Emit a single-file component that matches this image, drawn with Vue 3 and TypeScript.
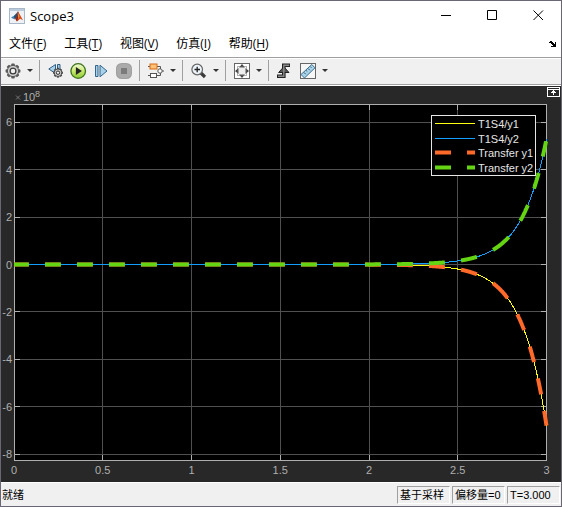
<script setup lang="ts">
interface Pt { x: number; y: number }

const menus = [
  { label: '文件', key: 'F' },
  { label: '工具', key: 'T' },
  { label: '视图', key: 'V' },
  { label: '仿真', key: 'I' },
  { label: '帮助', key: 'H' },
]

const plot = { left: 14, right: 546.5, top: 18.5, bottom: 374.5, zero: 178.5 }
const unit = 23.7
const xOf = (t: number) => plot.left + (t * (plot.right - plot.left)) / 3
const yOf = (v: number) => plot.zero - v * unit
const snap = (n: number) => Math.floor(n) + 0.5

const xTicks = [0, 0.5, 1, 1.5, 2, 2.5, 3]
const yTicks = [6, 4, 2, 0, -2, -4, -6, -8]

// Exponential response sampled at sub-pixel steps
function curve(end: number): Pt[] {
  const pts: Pt[] = []
  for (let x = plot.left; x <= plot.right; x += 0.125) {
    pts.push({ x, y: yOf(end * Math.exp(0.0402 * (x - plot.right))) })
  }
  return pts
}

function toPath(pts: Pt[]): string {
  return pts.map((p, i) => `${i ? 'L' : 'M'}${p.x.toFixed(2)} ${p.y.toFixed(2)}`).join('')
}

// Dashes advance along the dominant axis: 16 on, 16 off
function dashed(pts: Pt[]): string {
  let run = 1
  let open = false
  let d = ''
  pts.forEach((p, i) => {
    if (i) run += Math.max(Math.abs(p.x - pts[i - 1].x), Math.abs(p.y - pts[i - 1].y))
    const on = run % 32 < 16
    if (on) d += `${open ? 'L' : 'M'}${p.x.toFixed(2)} ${p.y.toFixed(2)}`
    open = on
  })
  return d
}

const down = curve(-6.8)
const up = curve(5.3)

const legend = [
  { name: 'T1S4/y1', color: '#ffff13', thick: false },
  { name: 'T1S4/y2', color: '#139fff', thick: false },
  { name: 'Transfer y1', color: '#ff6929', thick: true },
  { name: 'Transfer y2', color: '#64d413', thick: true },
]
const legendY = [37.5, 52.5, 66.5, 81.5]

const teeth = [0, 45, 90, 135, 180, 225, 270, 315]
</script>

<template>
  <div class="window">
    <header class="titlebar">
      <svg class="logo" width="16" height="16" viewBox="0 0 16 16" aria-hidden="true">
        <rect x=".5" y=".5" width="15" height="15" fill="#eef2f6" stroke="#a9b8c6" />
        <rect x="1" y="1" width="14" height="2" fill="#b9cbdc" />
        <path d="M2 9.5 5.5 7.5 8 5.5 6.5 10 4.5 11Z" fill="#3c82b4" />
        <path d="M5 8 9 3.5 8 9.5 5.5 11.5Z" fill="#294f70" />
        <path d="M9 3 10.5 6 14 12.2 11.2 10.7 8 13.4 6.3 10.8 8 8.5Z" fill="#d6491c" />
        <path d="M9 3 9.6 8 8 13.4 6.3 10.8 8 8.5Z" fill="#8c2417" />
        <path d="M9.3 4.5 10.3 8.5 9.5 11.5 9.1 8Z" fill="#f39b38" />
      </svg>
      <h1>Scope3</h1>
      <div class="controls">
        <button type="button" aria-label="最小化"><svg width="11" height="11" viewBox="0 0 11 11"><path d="M0 5.5H10" /></svg></button>
        <button type="button" aria-label="最大化"><svg width="11" height="11" viewBox="0 0 11 11"><path d="M.5 .5H9.5V9.5H.5Z" /></svg></button>
        <button type="button" aria-label="关闭"><svg width="11" height="11" viewBox="0 0 11 11"><path d="M.5 .5 10 10M10 .5 .5 10" /></svg></button>
      </div>
    </header>

    <nav class="menubar">
      <button v-for="m in menus" :key="m.key" type="button">{{ m.label }}(<u>{{ m.key }}</u>)</button>
      <button type="button" class="dock" aria-label="停靠">
        <svg width="8" height="6" viewBox="0 0 8 6" shape-rendering="crispEdges">
          <path d="M1 0h2v1h1v1h1v1h1V1h1v5H2V5h2V4H3V3H2V2H0V1h1Z" fill="#000" />
        </svg>
      </button>
    </nav>

    <div class="toolbar" role="toolbar">
      <button type="button" class="tool" aria-label="配置属性">
        <svg width="16" height="16" viewBox="0 0 16 16">
          <g fill="#5a5a5a"><rect v-for="a in teeth" :key="a" x="6.2" y=".6" width="3.6" height="4" rx="1" :transform="`rotate(${a} 8 8)`" /></g>
          <circle cx="8" cy="8" r="5.6" fill="#d2d2d2" stroke="#5a5a5a" />
          <circle cx="8" cy="8" r="2.9" fill="#f0f0f0" stroke="#3c3c3c" stroke-width="1.3" />
        </svg>
      </button>
      <button type="button" class="drop" aria-label="更多配置"><i></i></button>
      <span class="sep"></span>
      <button type="button" class="tool" aria-label="步退选项">
        <svg width="16" height="16" viewBox="0 0 16 16">
          <path d="M7.5 1.5V10.5L.8 6Z" fill="#a9d2ea" stroke="#315f84" />
          <path d="M9.5 1.5H12V9H9.5Z" fill="#a9d2ea" stroke="#315f84" />
          <g fill="#444"><rect v-for="a in teeth" :key="a" x="8.9" y="4.8" width="2.2" height="3" :transform="`rotate(${a} 10 9.7)`" /></g>
          <circle cx="10" cy="9.7" r="3.8" fill="#ccc" stroke="#484848" />
          <circle cx="10" cy="9.7" r="1.7" fill="#f4f4f4" stroke="#333" />
        </svg>
      </button>
      <button type="button" class="tool" aria-label="运行">
        <svg width="16" height="16" viewBox="0 0 16 16">
          <defs><linearGradient id="run" x1="0" y1="0" x2="0" y2="1"><stop offset="0" stop-color="#f4fbdc" /><stop offset=".5" stop-color="#c7e96c" /><stop offset="1" stop-color="#8cc833" /></linearGradient></defs>
          <circle cx="7.2" cy="8" r="7.3" fill="url(#run)" stroke="#3c711c" stroke-width="1.3" />
          <path d="M4.9 4V12L10.9 8Z" fill="#222" />
        </svg>
      </button>
      <button type="button" class="tool" aria-label="步进">
        <svg width="16" height="16" viewBox="0 0 16 16">
          <path d="M1.5 2.5H4V13.5H1.5ZM6 2.2V13.8L13 8Z" fill="#a9d2ea" stroke="#31658c" />
        </svg>
      </button>
      <button type="button" class="tool" aria-label="停止" disabled>
        <svg width="16" height="16" viewBox="0 0 16 16">
          <rect x="-1" y="0" width="16" height="16" rx="5.5" fill="#a0a0a0" />
          <rect x="0" y="1" width="14" height="14" rx="5" fill="#aaa" />
          <rect x="4" y="5" width="6" height="6" fill="#7b7b7b" />
        </svg>
      </button>
      <span class="sep"></span>
      <button type="button" class="tool" aria-label="突出显示模块">
        <svg width="16" height="16" viewBox="0 0 16 16">
          <path d="M0 3.5H12.5V6M12.5 10V12.5H0M14 8H16" fill="none" stroke="#555" />
          <rect x="2" y="1" width="7" height="5" fill="#ffc078" stroke="#d66b10" />
          <rect x="2.5" y="10.5" width="6" height="4" fill="#fff" stroke="#555" />
          <circle cx="12" cy="8" r="2.2" fill="#fff" stroke="#555" />
        </svg>
      </button>
      <button type="button" class="drop" aria-label="更多突出显示"><i></i></button>
      <span class="sep"></span>
      <button type="button" class="tool" aria-label="放大">
        <svg width="16" height="16" viewBox="0 0 16 16">
          <path d="M9.9 10 14 14" stroke="#3a3a3a" stroke-width="3.2" />
          <circle cx="6.2" cy="6.5" r="5.3" fill="#edf5fa" stroke="#666" stroke-width="1.2" />
          <path d="M3.5 6.5H9M6.2 3.8V9.2" stroke="#222" stroke-width="1.3" />
        </svg>
      </button>
      <button type="button" class="drop" aria-label="更多缩放"><i></i></button>
      <span class="sep"></span>
      <button type="button" class="tool" aria-label="缩放坐标区范围">
        <svg width="16" height="16" viewBox="0 0 16 16">
          <rect x=".5" y=".5" width="15" height="15" fill="#fff" stroke="#666" />
          <path d="M8 1 11 4.5H5ZM8 15 5 11.5H11ZM1 8 4.5 5V11ZM15 8 11.5 11V5Z" fill="#444" />
          <rect x="3.5" y="3.5" width="9" height="9" fill="none" stroke="#666" stroke-dasharray="1 1" />
          <rect x="5" y="5" width="6" height="6" fill="#eee" />
        </svg>
      </button>
      <button type="button" class="drop" aria-label="更多范围"><i></i></button>
      <span class="sep"></span>
      <button type="button" class="tool" aria-label="触发器">
        <svg width="16" height="16" viewBox="0 0 16 16">
          <path d="M0 13.2H6.8V2.2H13" fill="none" stroke="#222" stroke-width="3.6" />
          <path d="M6.8 3.8 12 9.5H1.6Z" fill="#555" stroke="#222" />
          <path d="M1 13.2H6.8V2.2H12.2" fill="none" stroke="#8a8a8a" stroke-width="1.4" />
        </svg>
      </button>
      <button type="button" class="tool" aria-label="测量">
        <svg width="16" height="16" viewBox="0 0 16 16">
          <rect x=".5" y=".5" width="15" height="15" fill="#f6f6f6" stroke="#666" />
          <path d="M1 11.5 11.8 1.5 15 4.8 4.5 15Z" fill="#a9d4ea" stroke="#3d6c8a" />
          <path d="M4 9.5 5.7 11.2M6.2 7.5 7.3 8.6M8.2 5.6 9.9 7.3M10.3 3.6 11.4 4.7" stroke="#28516c" />
        </svg>
      </button>
      <button type="button" class="drop" aria-label="更多测量"><i></i></button>
    </div>

    <main class="scope">
      <svg class="chart" viewBox="1 0 560 396" role="img" aria-label="Scope3">
        <rect x="14" y="18" width="533" height="357" fill="#000" />
        <g class="grid">
          <path v-for="t in xTicks.slice(1, -1)" :key="`gx${t}`" :d="`M${snap(xOf(t))} 19V374`" />
          <path v-for="v in yTicks" :key="`gy${v}`" :d="`M15 ${snap(yOf(v))}H546`" />
        </g>
        <g class="axis">
          <rect x="14.5" y="18.5" width="532" height="356" />
          <path v-for="t in xTicks.slice(1, -1)" :key="`tx${t}`" :d="`M${snap(xOf(t))} 19v5M${snap(xOf(t))} 374v-5`" />
          <path v-for="v in yTicks" :key="`ty${v}`" :d="`M15 ${snap(yOf(v))}h5M546 ${snap(yOf(v))}h-5`" />
        </g>

        <path class="thin" :d="toPath(down)" stroke="#ffff13" />
        <path class="thin" :d="toPath(up)" stroke="#139fff" />
        <path class="thick" :d="dashed(down)" stroke="#ff6929" />
        <path class="thick" :d="dashed(up)" stroke="#64d413" />

        <g class="ticks">
          <text v-for="t in xTicks" :key="`lx${t}`" :x="xOf(t)" y="388" text-anchor="middle">{{ t }}</text>
          <text v-for="v in yTicks" :key="`ly${v}`" x="12" :y="Math.round(yOf(v)) + 4" text-anchor="end">{{ v }}</text>
          <path d="M16 9.5 20 13.5M20 9.5 16 13.5" stroke="#777" />
          <text x="23" y="15">10</text>
          <text class="power" x="35" y="11">8</text>
        </g>

        <rect x="431.5" y="29.5" width="104" height="60" fill="#000" stroke="#e6e6e6" />
        <g v-for="(item, i) in legend" :key="item.name">
          <path v-if="item.thick" class="thick" :d="`M435 ${legendY[i]}h16m16 0h8`" :stroke="item.color" />
          <path v-else class="thin" :d="`M435 ${legendY[i]}h40`" :stroke="item.color" />
          <text class="entry" x="478" :y="legendY[i] + 4.5">{{ item.name }}</text>
        </g>
      </svg>
      <button type="button" class="undock" aria-label="最大化坐标区">
        <svg width="13" height="10" viewBox="0 0 13 10" shape-rendering="crispEdges">
          <path d="M.5 .5H12.5V9.5H.5ZM1 2.5H12M6.5 4V8" fill="none" stroke="#fff" />
          <path d="M6 3h1v1h1v1h1v1H4V5h1V4h1Z" fill="#fff" />
        </svg>
      </button>
    </main>

    <footer class="status">
      <span class="ready">就绪</span>
      <span class="cell">基于采样</span>
      <span class="cell">偏移量=0</span>
      <span class="cell">T=3.000</span>
    </footer>
  </div>
</template>

<style>
body {
  margin: 0;
}
</style>

<style scoped>
.window {
  box-sizing: border-box;
  border: 1px solid #6b6675;
  background: #fff;
  color: #000;
  font: 12px/16px "Open Sans", "Noto Sans CJK SC", sans-serif;
}
button {
  margin: 0;
  padding: 0;
  border: 0;
  background: none;
  color: inherit;
  font: inherit;
}
svg {
  display: block;
  overflow: visible;
}
.titlebar {
  display: flex;
  align-items: center;
  height: 29px;
  padding-left: 8px;
}
h1 {
  flex: 1;
  margin: 0 0 0 5px;
  font-size: 13px;
  font-weight: 400;
}
.controls {
  display: flex;
  align-self: stretch;
}
.controls button {
  display: flex;
  align-items: center;
  justify-content: center;
  width: 46px;
}
.controls path {
  fill: none;
  stroke: #000;
}
.menubar {
  display: flex;
  align-items: center;
  gap: 18px;
  height: 27px;
  padding: 0 4px 0 8px;
  border-bottom: 1px solid #a0a0a0;
}
.menubar u {
  text-underline-offset: 2px;
}
.dock {
  margin-left: auto;
}
.toolbar {
  display: flex;
  align-items: center;
  height: 23px;
  padding-bottom: 2px;
  border-top: 1px solid #fff;
  border-bottom: 1px solid #a0a0a0;
  background: #f0f0f0;
}
.tool {
  padding: 0 3px 0 4px;
}
.drop {
  display: flex;
  justify-content: center;
  width: 12px;
}
.drop i {
  border: 3px solid transparent;
  border-top-color: #333;
  border-bottom-width: 0;
}
.sep {
  width: 1px;
  height: 21px;
  margin: 0 4px 0 3px;
  background: #a0a0a0;
}
.scope {
  position: relative;
  border-top: 1px solid #fff;
  background: #282828;
}
.chart {
  width: 100%;
  height: auto;
  overflow: hidden;
}
.grid {
  fill: none;
  stroke: #505050;
}
.axis {
  fill: none;
  stroke: #afafaf;
}
.thin {
  fill: none;
  stroke-width: 1;
  shape-rendering: crispEdges;
}
.thick {
  fill: none;
  stroke-width: 4;
}
.ticks,
.entry {
  font-family: "Liberation Sans", sans-serif;
  font-size: 11px;
}
.ticks text {
  fill: #afafaf;
}
.ticks .power {
  font-size: 9px;
}
.entry {
  fill: #e6e6e6;
}
.undock {
  position: absolute;
  top: 1px;
  right: 1px;
}
.status {
  display: flex;
  align-items: center;
  gap: 2px;
  height: 23px;
  padding-right: 1px;
  border-top: 1px solid #fff;
  background: #f0f0f0;
  font: 11px/16px "Liberation Sans", "Noto Sans CJK SC", sans-serif;
}
.ready {
  flex: 1;
  padding-left: 1px;
}
.cell {
  box-sizing: border-box;
  width: 53px;
  padding-left: 2px;
  border: 1px solid #fff;
  border-top-color: #a0a0a0;
  border-left-color: #a0a0a0;
  white-space: nowrap;
}
</style>
